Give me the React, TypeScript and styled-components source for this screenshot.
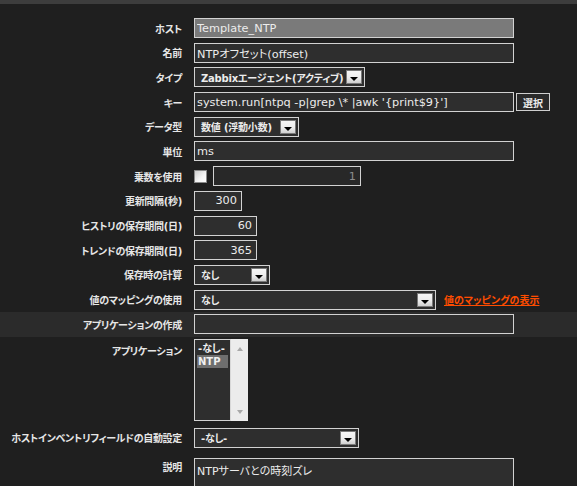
import React from 'react';
import styled, {createGlobalStyle} from 'styled-components';

const GlobalStyle = createGlobalStyle`
  html, body {
    margin: 0;
    background: #1f1f1f;
    overflow: hidden;
  }
`;

const LATIN = `"DejaVu Sans", "Noto Sans CJK JP", sans-serif`;

const Page = styled.div`
  width: 577px;
  height: 486px;
  background: #1f1f1f;
  overflow: hidden;
`;

const TopBar = styled.div`
  height: 4px;
  background: #3d3d3d;
`;

const Form = styled.div`
  padding-top: 11.7px;
`;

const Row = styled.div<{ $band?: boolean; $top?: boolean; $padTop?: number }>`
  display: grid;
  grid-template-columns: 182px 1fr;
  column-gap: 12px;
  align-items: ${p => (p.$top ? 'start' : 'center')};
  padding: ${p => (p.$padTop ?? 2.35)}px 0 2.35px;
  background: ${p => (p.$band ? '#2b2b2b' : 'transparent')};
`;

const Label = styled.div<{ $offset?: number }>`
  text-align: right;
  white-space: nowrap;
  font-family: ${LATIN};
  font-feature-settings: "palt";
  font-weight: bold;
  font-size: 10px;
  letter-spacing: -0.3px;
  color: #e6e6e6;
  padding-top: ${p => p.$offset ?? 0}px;
`;

const Controls = styled.div<{ $gap?: number }>`
  display: flex;
  align-items: center;
  gap: ${p => p.$gap ?? 6}px;
`;

const TextBox = styled.input<{ $w: number; $right?: boolean; $grey?: boolean; $dim?: boolean }>`
  box-sizing: border-box;
  width: ${p => p.$w}px;
  height: 20px;
  margin: 0;
  padding: 0 ${p => (p.$right ? 4 : 2)}px 0 2px;
  border: 1px solid #d2d2d2;
  border-radius: 0;
  background: ${p => (p.$grey ? '#7a7a7a' : p.$dim ? '#282828' : '#2e2e2e')};
  color: ${p => (p.$dim ? '#8c8c8c' : '#ececec')};
  font-family: ${LATIN};
  font-feature-settings: "palt";
  font-size: 11.3px;
  line-height: 18px;
  text-align: ${p => (p.$right ? 'right' : 'left')};
  outline: none;
`;

const SelectBox = styled.div<{ $w: number }>`
  box-sizing: border-box;
  width: ${p => p.$w}px;
  height: 20px;
  display: flex;
  align-items: center;
  justify-content: space-between;
  padding: 0 2px 0 6px;
  border: 1px solid #d2d2d2;
  background: #2e2e2e;
  color: #ececec;
  font-family: ${LATIN};
  font-feature-settings: "palt";
  font-weight: bold;
  font-size: 10px;
  letter-spacing: -0.2px;
  white-space: nowrap;
`;

const DropButton = styled.span`
  box-sizing: border-box;
  flex: none;
  width: 16px;
  height: 14px;
  display: flex;
  align-items: flex-end;
  justify-content: center;
  padding-bottom: 2px;
  border: 1px solid #7a7a7a;
  background: linear-gradient(#f6f6f6 0%, #ededed 55%, #cfcfcf 100%);

  &::after {
    content: '';
    width: 0;
    height: 0;
    border-left: 4px solid transparent;
    border-right: 4px solid transparent;
    border-top: 4px solid #000;
  }
`;

const SmallButton = styled.button`
  box-sizing: border-box;
  height: 18px;
  margin: 0;
  padding: 0 6px;
  border: 1px solid #cfcfcf;
  background: #2a2a2a;
  color: #ececec;
  font-family: ${LATIN};
  font-weight: bold;
  font-size: 10px;
`;

const CheckBox = styled.span`
  box-sizing: border-box;
  width: 13px;
  height: 13px;
  border: 1px solid #8a8a8a;
  background: linear-gradient(135deg, #cfcfcf 0%, #f6f6f6 60%, #ffffff 100%);
`;

const MapLink = styled.a`
  margin-left: 2px;
  color: #ff4d00;
  font-family: ${LATIN};
  font-feature-settings: "palt";
  font-weight: bold;
  font-size: 10px;
  text-decoration: underline;
  cursor: pointer;
`;

const ListBox = styled.div`
  display: flex;
  width: 54px;
  height: 82px;
  margin-bottom: 2px;
`;

const ListOptions = styled.div`
  box-sizing: border-box;
  width: 36px;
  padding: 2px 2px;
  border: 1px solid #d2d2d2;
  border-right: none;
  background: #2e2e2e;
`;

const ListOption = styled.div<{ $selected?: boolean }>`
  height: 13px;
  line-height: 13px;
  padding-left: 1px;
  background: ${p => (p.$selected ? '#6e6e6e' : 'transparent')};
  color: #f0f0f0;
  font-family: ${LATIN};
  font-feature-settings: "palt";
  font-weight: bold;
  font-size: 10px;
  white-space: nowrap;
`;

const ScrollTrack = styled.div`
  width: 18px;
  display: flex;
  flex-direction: column;
  justify-content: space-between;
  align-items: center;
  padding: 8px 0 7px;
  box-sizing: border-box;
  background: #ececec;
  border-left: 1px solid #d8d8d8;
`;

const ScrollArrow = styled.span<{ $down?: boolean }>`
  width: 0;
  height: 0;
  border-left: 3.5px solid transparent;
  border-right: 3.5px solid transparent;
  ${p => (p.$down ? 'border-top: 4px solid #a8a8a8;' : 'border-bottom: 4px solid #a8a8a8;')}
`;

const TextArea = styled.textarea`
  box-sizing: border-box;
  width: 320px;
  height: 60px;
  margin: 0;
  padding: 3px 2px;
  border: 1px solid #d2d2d2;
  border-radius: 0;
  background: #2e2e2e;
  color: #ececec;
  font-family: ${LATIN};
  font-feature-settings: "palt";
  font-size: 11px;
  resize: none;
  outline: none;
`;

function Select({width, value}: { width: number; value: string }) {
    return (
        <SelectBox $w={width}>
            <span>{value}</span>
            <DropButton/>
        </SelectBox>
    );
}

function App() {
    return (
        <Page>
            <GlobalStyle/>
            <TopBar/>
            <Form>
                <Row>
                    <Label>ホスト</Label>
                    <Controls><TextBox $w={320} $grey readOnly defaultValue="Template_NTP"/></Controls>
                </Row>
                <Row>
                    <Label>名前</Label>
                    <Controls><TextBox $w={320} readOnly defaultValue="NTPオフセット(offset)"/></Controls>
                </Row>
                <Row>
                    <Label>タイプ</Label>
                    <Controls><Select width={171} value="Zabbixエージェント(アクティブ)"/></Controls>
                </Row>
                <Row>
                    <Label>キー</Label>
                    <Controls $gap={2}>
                        <TextBox $w={320} readOnly defaultValue="system.run[ntpq -p|grep \* |awk '{print$9}']"/>
                        <SmallButton>選択</SmallButton>
                    </Controls>
                </Row>
                <Row>
                    <Label>データ型</Label>
                    <Controls><Select width={105} value="数値 (浮動小数)"/></Controls>
                </Row>
                <Row>
                    <Label>単位</Label>
                    <Controls><TextBox $w={320} readOnly defaultValue="ms"/></Controls>
                </Row>
                <Row>
                    <Label>乗数を使用</Label>
                    <Controls>
                        <CheckBox/>
                        <TextBox $w={148} $right $dim readOnly defaultValue="1"/>
                    </Controls>
                </Row>
                <Row>
                    <Label>更新間隔(秒)</Label>
                    <Controls><TextBox $w={48} $right readOnly defaultValue="300"/></Controls>
                </Row>
                <Row>
                    <Label>ヒストリの保存期間(日)</Label>
                    <Controls><TextBox $w={63} $right readOnly defaultValue="60"/></Controls>
                </Row>
                <Row>
                    <Label>トレンドの保存期間(日)</Label>
                    <Controls><TextBox $w={63} $right readOnly defaultValue="365"/></Controls>
                </Row>
                <Row>
                    <Label>保存時の計算</Label>
                    <Controls><Select width={76} value="なし"/></Controls>
                </Row>
                <Row>
                    <Label>値のマッピングの使用</Label>
                    <Controls>
                        <Select width={242} value="なし"/>
                        <MapLink>値のマッピングの表示</MapLink>
                    </Controls>
                </Row>
                <Row $band>
                    <Label>アプリケーションの作成</Label>
                    <Controls><TextBox $w={320} readOnly defaultValue=""/></Controls>
                </Row>
                <Row $top>
                    <Label $offset={4}>アプリケーション</Label>
                    <ListBox>
                        <ListOptions>
                            <ListOption>-なし-</ListOption>
                            <ListOption $selected>NTP</ListOption>
                        </ListOptions>
                        <ScrollTrack>
                            <ScrollArrow/>
                            <ScrollArrow $down/>
                        </ScrollTrack>
                    </ListBox>
                </Row>
                <Row>
                    <Label>ホストインベントリフィールドの自動設定</Label>
                    <Controls><Select width={165} value="-なし-"/></Controls>
                </Row>
                <Row $top $padTop={7.7}>
                    <Label $offset={1}>説明</Label>
                    <Controls><TextArea readOnly defaultValue="NTPサーバとの時刻ズレ"/></Controls>
                </Row>
            </Form>
        </Page>
    );
}

export default App;
